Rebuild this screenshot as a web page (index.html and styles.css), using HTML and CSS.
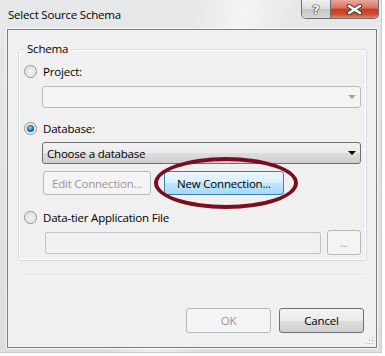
FILE: index.html
```html
<!DOCTYPE html>
<html lang="en">
<head>
    <meta charset="UTF-8">
    <title>Select Source Schema</title>
    <link rel="stylesheet" href="styles.css">
</head>
<body>
    <div class="window">
        <div class="titlebar">
            <span class="title">Select Source Schema</span>
            <div class="caption-buttons">
                <span class="cap-btn help">?</span>
                <span class="cap-btn close">
                    <svg width="17" height="11" viewBox="0 0 17 11">
                        <path d="M3 2 L14 9 M14 2 L3 9" stroke="#3a3a3a" stroke-width="4.4" stroke-linecap="round"/>
                        <path d="M3 2 L14 9 M14 2 L3 9" stroke="#fff" stroke-width="2.4" stroke-linecap="round"/>
                    </svg>
                </span>
            </div>
        </div>
        <div class="client">
            <div class="group">
                <span class="group-label">Schema</span>
                <label class="option"><span class="radio"></span>Project:</label>
                <div class="combo disabled"><span class="value"></span><span class="arrow"></span></div>
                <label class="option"><span class="radio checked"></span>Database:</label>
                <div class="combo"><span class="value">Choose a database</span><span class="arrow"></span></div>
                <div class="conn-row">
                    <button class="btn edit" disabled>Edit Connection...</button>
                    <button class="btn new hover">New Connection...</button>
                    <span class="highlight"></span>
                </div>
                <label class="option"><span class="radio"></span>Data-tier Application File</label>
                <div class="file-row">
                    <div class="textbox"></div>
                    <button class="btn browse" disabled>...</button>
                </div>
            </div>
            <div class="separator"></div>
            <div class="dialog-buttons">
                <button class="btn" disabled>OK</button>
                <button class="btn default">Cancel</button>
            </div>
            <svg class="grip" width="10" height="10" viewBox="0 0 10 10">
                <g fill="#fff">
                    <rect x="8" y="2" width="1" height="1"/><rect x="8" y="5" width="1" height="1"/><rect x="8" y="8" width="1" height="1"/>
                    <rect x="5" y="5" width="1" height="1"/><rect x="5" y="8" width="1" height="1"/><rect x="2" y="8" width="1" height="1"/>
                </g>
                <g fill="#a6a6a6">
                    <rect x="7" y="1" width="1" height="1"/><rect x="7" y="4" width="1" height="1"/><rect x="7" y="7" width="1" height="1"/>
                    <rect x="4" y="4" width="1" height="1"/><rect x="4" y="7" width="1" height="1"/><rect x="1" y="7" width="1" height="1"/>
                </g>
            </svg>
        </div>
    </div>
</body>
</html>
```

FILE: styles.css
```css
body {
    margin: 0;
    background: #fff;
    font-family: "Open Sans", "Noto Sans", sans-serif;
    font-size: 11.5px;
    letter-spacing: -0.2px;
    color: #000;
}
.window {
    width: 382px;
    height: 353px;
    box-sizing: border-box;
    padding: 0 4px 5px 7px;
    background:
        linear-gradient(105deg, rgba(255,255,255,0) 42%, rgba(255,255,255,.55) 52%, rgba(255,255,255,0) 62%),
        linear-gradient(#e7e8e9, #dcdee0);
    border-right: 1px solid #c9cbcd;
    border-bottom: 1px solid #c9cbcd;
}
.titlebar {
    display: flex;
    justify-content: space-between;
    align-items: flex-start;
    height: 29px;
    margin: 0 -4px 0 -7px;
}
.title {
    margin: 7px 0 0 8px;
    line-height: 16px;
}
.caption-buttons {
    display: flex;
    margin-right: 2px;
    border: 1px solid #6b6f74;
    border-top: none;
    border-radius: 0 0 5px 5px;
    overflow: hidden;
}
.cap-btn {
    display: flex;
    align-items: center;
    justify-content: center;
    height: 18px;
}
.help {
    width: 28px;
    border-right: 1px solid #6b6f74;
    background: linear-gradient(#f0f0f0, #dcdcdc 50%, #c4c4c4 51%, #d8d8d8);
    color: #fff;
    font-family: "DejaVu Sans", sans-serif;
    font-weight: bold;
    font-size: 13px;
    text-shadow: 0 0 1px #333, 0 0 1px #333, 0 0 1px #333, 0 0 1px #333;
}
.close {
    width: 47px;
    background: linear-gradient(#e9a99b, #d7705c 45%, #c63c22 52%, #cd4f35 80%, #dd8a74);
}
.client {
    position: relative;
    height: 319px;
    box-sizing: border-box;
    border: 1px solid #7c7c7c;
    background: #f0f0f0;
    box-shadow: 0 0 0 1px rgba(255,255,255,.7);
    padding-top: 19px;
}
.group {
    position: relative;
    margin: 0 9px 0 10px;
    padding: 13px 5px 5px 5px;
    border: 1px solid #d5dfe5;
    border-radius: 3px;
    box-shadow: inset 0 0 0 1px #fff;
}
.group-label {
    position: absolute;
    left: 6px;
    top: -9px;
    padding: 0 2px;
    line-height: 16px;
    background: #f0f0f0;
}
.option {
    display: flex;
    align-items: center;
    gap: 6px;
    height: 16px;
}
.option + .combo { margin-top: 7px; }
.combo + .option { margin-top: 12px; }
.option + .combo + .option + .combo { margin-top: 6px; }
.radio {
    width: 13px;
    height: 13px;
    box-sizing: border-box;
    border: 1px solid #8f8f8f;
    border-radius: 50%;
    background: radial-gradient(circle, #f6f6f6 0, #e8e8e8 3px, #d6d6d6 6px);
    box-shadow: inset 0 0 0 1px #f4f4f4;
}
.radio.checked::after {
    content: "";
    display: block;
    width: 7px;
    height: 7px;
    margin: 2px;
    border-radius: 50%;
    background: radial-gradient(circle at 45% 40%, #9fdcfb 0, #2e8fd6 2px, #0e4e8e 4px);
}
.combo {
    display: flex;
    align-items: center;
    height: 22px;
    margin-left: 18px;
    box-sizing: border-box;
    border: 1px solid #707070;
    border-radius: 3px;
    background: linear-gradient(#f2f2f2, #ebebeb 50%, #dddddd 51%, #cfcfcf);
}
.combo.disabled {
    border-color: #b9b9b9;
    background: #f4f4f4;
}
.combo .value {
    flex: 1;
    padding-left: 4px;
}
.arrow {
    width: 0;
    height: 0;
    margin-right: 4px;
    border-left: 4px solid transparent;
    border-right: 4px solid transparent;
    border-top: 4px solid #000;
}
.combo.disabled .arrow { border-top-color: #a3a3a3; }
.btn {
    height: 24px;
    box-sizing: border-box;
    padding: 0;
    border: 1px solid #707070;
    border-radius: 3px;
    background: linear-gradient(#f2f2f2, #ebebeb 50%, #dddddd 51%, #cfcfcf);
    font: inherit;
    letter-spacing: inherit;
    color: #000;
}
.btn:disabled {
    border-color: #b5b8ba;
    background: #f4f4f4;
    color: #969696;
}
.conn-row {
    position: relative;
    display: flex;
    margin: 7px 0 0 19px;
}
.edit { width: 108px; }
.new {
    width: 120px;
    margin-left: 13px;
}
.btn.hover {
    border-color: #3c7fb1;
    background: linear-gradient(#eaf6fd, #d9f0fc 50%, #bee6fd 51%, #a7d9f5);
}
.highlight {
    position: absolute;
    left: 111px;
    top: -14px;
    width: 144px;
    height: 52px;
    box-sizing: border-box;
    border: 4px solid #7c0c1e;
    border-radius: 50%;
}
.conn-row + .option { margin-top: 14px; }
.file-row {
    display: flex;
    align-items: center;
    gap: 6px;
    height: 25px;
    margin: 5px 0 0 21px;
}
.textbox {
    flex: 1;
    height: 22px;
    box-sizing: border-box;
    border: 1px solid #c3c3c3;
    border-radius: 2px;
    background: #f0f0f0;
}
.browse {
    width: 34px;
    height: 25px;
    font-size: 10px;
}
.separator {
    height: 1px;
    margin: 13px 10px 0 13px;
    background: #e3e3e3;
    border-bottom: 1px solid #fafafa;
}
.dialog-buttons {
    display: flex;
    justify-content: flex-end;
    gap: 8px;
    margin-top: 32px;
    padding-right: 12px;
}
.dialog-buttons .btn {
    width: 85px;
    height: 25px;
}
.grip {
    position: absolute;
    right: 1px;
    bottom: 1px;
}
```
